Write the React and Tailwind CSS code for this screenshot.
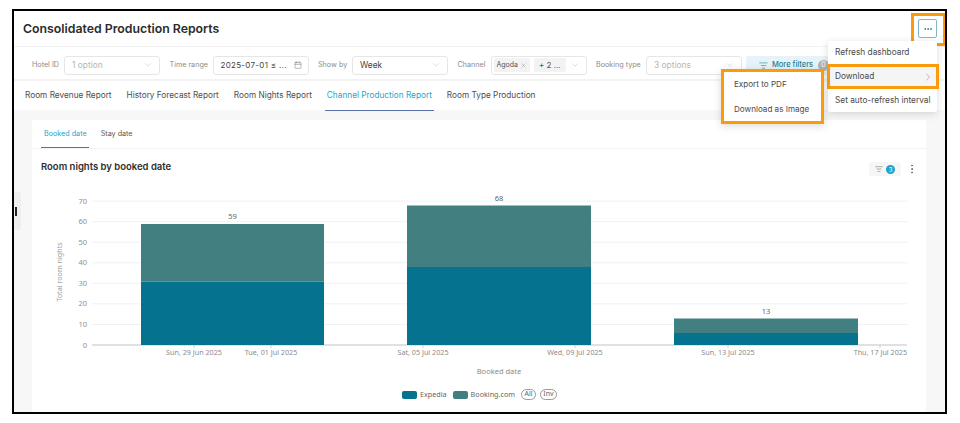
import React from "react";
import { Calendar, ChevronDown, ChevronRight, ListFilter, MoreHorizontal, MoreVertical, X } from "lucide-react";

const TICKS_Y = [0, 10, 20, 30, 40, 50, 60, 70];
const TICKS_X = [
  { x: 194, label: "Sun, 29 Jun 2025" },
  { x: 271, label: "Tue, 01 Jul 2025" },
  { x: 423, label: "Sat, 05 Jul 2025" },
  { x: 575, label: "Wed, 09 Jul 2025" },
  { x: 728, label: "Sun, 13 Jul 2025" },
  { x: 880, label: "Thu, 17 Jul 2025", anchor: "end", tx: 907 },
];
const BARS = [
  { x: 141, w: 183, top: 224, mid: 281.5, total: 59 },
  { x: 407, w: 184, top: 205.5, mid: 267, total: 68 },
  { x: 674, w: 184, top: 318.5, mid: 333, total: 13 },
];

function Field({ label, labelWidth, children }) {
  return (
    <div className="flex items-center gap-[5px]">
      <span className={`text-[7.2px] text-[#8b8b8b] whitespace-nowrap ${labelWidth}`}>{label}</span>
      {children}
    </div>
  );
}

function SelectBox({ text, muted }) {
  return (
    <div className="w-[96px] h-[19px] border border-[#e6e6e6] rounded-[3px] bg-white flex items-center justify-between pl-[7px] pr-[6px]">
      <span className={`text-[8.4px] ${muted ? "text-[#b5b5b5]" : "text-[#444]"}`}>{text}</span>
      <ChevronDown size={10} strokeWidth={1} className="text-[#aaa]" />
    </div>
  );
}

function Chart() {
  // svg sits inside the card: page x - 32, page y - 188
  return (
    <svg width="893" height="224" viewBox="32 188 893 224" className="block" fontFamily="'Noto Sans', sans-serif">
      {TICKS_Y.map((t) => {
        const y = 345 - t * 2.055;
        return (
          <g key={t}>
            {t > 0 && <line x1="92" x2="907" y1={y} y2={y} stroke="#eef1f8" strokeWidth="1" />}
            <text x="87" y={y + 2.5} textAnchor="end" fontSize="7.5" fill="#8f8f8f">{t}</text>
          </g>
        );
      })}
      <line x1="92" x2="907" y1="345" y2="345" stroke="#c4c4cc" strokeWidth="1.2" />
      {TICKS_X.map((t) => (
        <g key={t.label}>
          <line x1={t.x} x2={t.x} y1="345" y2="348" stroke="#c4c4cc" strokeWidth="0.8" />
          <text x={t.tx || t.x} y="355" textAnchor={t.anchor || "middle"} fontSize="7.2" fill="#8a8a8a">{t.label}</text>
        </g>
      ))}
      {BARS.map((b) => (
        <g key={b.x}>
          <rect x={b.x} y={b.top} width={b.w} height={b.mid - b.top} fill="#427f80" />
          <rect x={b.x} y={b.mid} width={b.w} height={345 - b.mid} fill="#05728f" />
          <text x={b.x + b.w / 2} y={b.top - 5} textAnchor="middle" fontSize="7.5" fill="#666">{b.total}</text>
        </g>
      ))}
      <text x="62" y="272" textAnchor="middle" fontSize="7.2" fill="#a0a0a0" transform="rotate(-90 62 272)">Total room nights</text>
      <text x="499" y="374" textAnchor="middle" fontSize="7.5" fill="#8a8a8a">Booked date</text>
    </svg>
  );
}

export default function App() {
  return (
    <div className="w-[960px] h-[423px] bg-white pt-[9px] pl-[12px] font-['Inter',sans-serif]">
      <div className="relative w-[935px] h-[405px] border-2 border-black overflow-hidden flex flex-col bg-white">
        {/* title */}
        <div className="h-[36px] shrink-0 flex items-center justify-between pl-[9px] pr-[8px] border-b border-[#f2f2f2]">
          <h1 className="text-[12.3px] font-semibold text-[#2b2b2b] pt-[1px]">Consolidated Production Reports</h1>
          <button className="w-[19px] h-[19px] border border-[#7fb9c9] rounded-[2px] flex items-center justify-center text-[#1b6f86]">
            <MoreHorizontal size={10} strokeWidth={2} />
          </button>
        </div>

        {/* filters */}
        <div className="h-[34px] shrink-0 flex items-center gap-[9.5px] pl-[18px] pt-[4px] border-b-2 border-[#f3f3f3]">
          <Field label="Hotel ID" labelWidth="w-[27px]"><SelectBox text="1 option" muted /></Field>
          <Field label="Time range" labelWidth="w-[38px]">
            <div className="w-[96px] h-[19px] border border-[#e6e6e6] rounded-[3px] flex items-center justify-between pl-[7px] pr-[6px]">
              <span className="text-[8px] text-[#444] tracking-[0.3px] whitespace-nowrap">2025-07-01 ≤ ...</span>
              <Calendar size={8} strokeWidth={1.2} className="text-[#555]" />
            </div>
          </Field>
          <Field label="Show by" labelWidth="w-[29px]"><SelectBox text="Week" /></Field>
          <Field label="Channel" labelWidth="w-[28px]">
            <div className="w-[96px] h-[19px] border border-[#e6e6e6] rounded-[3px] flex items-center pl-[2px] pr-[6px] gap-[4px]">
              <span className="h-[14px] w-[37px] bg-[#f3f3f3] rounded-[2px] flex items-center justify-center gap-[2px] text-[7px] text-[#555]">
                Agoda <X size={7} strokeWidth={1} />
              </span>
              <span className="h-[14px] w-[32px] bg-[#f3f3f3] rounded-[2px] flex items-center justify-center text-[8px] text-[#555] whitespace-nowrap">+ 2 ...</span>
              <ChevronDown size={10} strokeWidth={1} className="text-[#aaa] ml-auto" />
            </div>
          </Field>
          <Field label="Booking type" labelWidth="w-[45px]"><SelectBox text="3 options" muted /></Field>
          <div className="-ml-[5.5px] relative w-[82px] h-[19px] bg-[#e6f3f8] rounded-[2px] flex items-center pl-[13px] gap-[4px] text-[#1f7f96]">
            <ListFilter size={9} strokeWidth={1.5} />
            <span className="text-[7.5px] font-medium whitespace-nowrap">More filters</span>
            <span className="absolute -right-[1px] top-[4px] w-[11px] h-[11px] rounded-full bg-[#b3b3b3] text-white text-[7px] flex items-center justify-center">0</span>
          </div>
        </div>

        {/* report tabs */}
        <div className="h-[29px] shrink-0 flex items-stretch pl-[9px] gap-[11px] text-[8.25px] text-[#4d4d4d]">
          <span className="flex items-center px-[2px]">Room Revenue Report</span>
          <span className="flex items-center px-[2px]">History Forecast Report</span>
          <span className="flex items-center px-[2px]">Room Nights Report</span>
          <span className="flex items-center px-[2px] text-[#2aa5c6] border-b border-[#5a6fa5] -mb-[1px] relative">Channel Production Report</span>
          <span className="flex items-center px-[2px]">Room Type Production</span>
        </div>

        {/* content */}
        <div className="flex-1 bg-[#f7f7f7] pt-[10px] pl-[18px] pr-[19px]">
          <div className="bg-white h-full">
            <div className="h-[29px] flex items-stretch pl-[9px] gap-[12px] text-[7.2px] border-b border-[#f3f3f3]">
              <span className="flex items-center pl-[3px] pr-[2px] pt-[1px] text-[#2aa5c6] border-b border-[#5a6fa5]">Booked date</span>
              <span className="flex items-center pt-[1px] text-[#555]">Stay date</span>
            </div>
            <div className="h-[39px] flex items-center justify-between pl-[9px] pr-[8px] pb-[3px]">
              <h2 className="text-[9.5px] font-semibold text-[#2e2e2e]">Room nights by booked date</h2>
              <div className="flex items-center gap-[5px] pt-[4px]">
                <div className="w-[32px] h-[14px] bg-[#f6f6f6] rounded-[3px] flex items-center justify-center gap-[3px]">
                  <ListFilter size={8} strokeWidth={1.5} className="text-[#666]" />
                  <span className="w-[9px] h-[9px] rounded-full bg-[#1aa3cf] text-white text-[6px] flex items-center justify-center">3</span>
                </div>
                <MoreVertical size={12} strokeWidth={2} className="text-[#666]" />
              </div>
            </div>
            <Chart />
            <div className="flex items-center justify-center gap-[3px] -mt-[23px] pl-[1px] relative font-['Noto_Sans',sans-serif] text-[7.2px] text-[#666]">
              <span className="w-[15px] h-[8px] rounded-[2px] bg-[#05728f]" />
              <span className="mr-[3px]">Expedia</span>
              <span className="w-[15px] h-[8px] rounded-[2px] bg-[#427f80]" />
              <span className="mr-[3px]">Booking.com</span>
              <span className="w-[15px] h-[11px] rounded-full border border-[#999] flex items-center justify-center text-[7px]">All</span>
              <span className="w-[17px] h-[11px] rounded-full border border-[#999] flex items-center justify-center text-[7px] ml-[1px]">Inv</span>
            </div>
          </div>
        </div>

        {/* sidebar handle */}
        <div className="absolute left-0 top-[181px] w-[7px] h-[38px] bg-[#eeeeee] rounded-r-[2px] flex items-center pl-[1px]">
          <span className="w-[2px] h-[9px] bg-[#222]" />
        </div>

        {/* orange box around the button */}
        <div className="absolute left-[897px] top-[2px] w-[35px] h-[33px] border-[3px] border-[#f99b0b]" />

        {/* main menu */}
        <div className="absolute left-[814px] top-[30px] w-[109px] h-[71px] bg-white shadow-[0_2px_8px_rgba(0,0,0,0.15)] rounded-[2px] flex flex-col text-[8.3px] text-[#4a4a4a]">
          <div className="h-[23px] flex items-center pl-[7px]">Refresh dashboard</div>
          <div className="h-[25px] flex items-center justify-between pl-[7px] pr-[3px] bg-[#f5f5f5]">
            <span>Download</span>
            <ChevronRight size={12} strokeWidth={1} className="text-[#777]" />
          </div>
          <div className="h-[23px] flex items-center pl-[7px] whitespace-nowrap">Set auto-refresh interval</div>
        </div>
        <div className="absolute left-[813px] top-[53px] w-[112px] h-[25px] border-[3px] border-[#f99b0b]" />

        {/* submenu */}
        <div className="absolute left-[707px] top-[58px] w-[103px] h-[55px] bg-white border-[3px] border-[#f99b0b] shadow-[0_2px_8px_rgba(0,0,0,0.15)] flex flex-col justify-center pl-[10px] gap-[12px] text-[8.1px] text-[#4a4a4a]">
          <span>Export to PDF</span>
          <span>Download as Image</span>
        </div>
      </div>
    </div>
  );
}
